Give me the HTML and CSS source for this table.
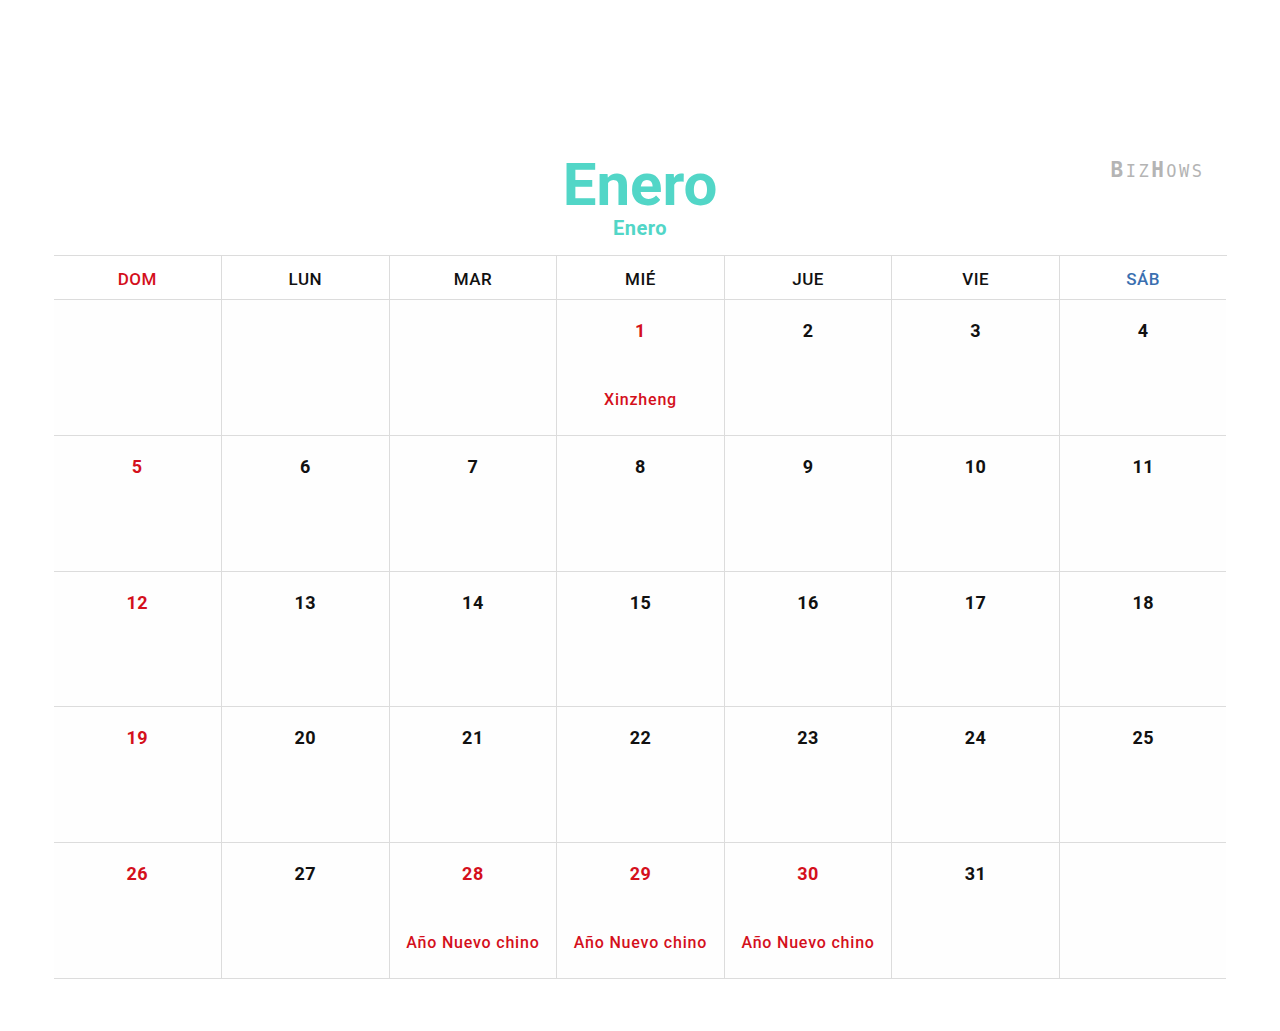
FILE: index.html
```html
<!DOCTYPE html>
<html lang="es">
<head>
<meta charset="utf-8">
<link rel="stylesheet" href="styles.css">
</head>
<body>
<div class="page">
  <header class="head">
    <div class="title">Enero</div>
    <div class="subtitle">Enero</div>
    <div class="logo">B<span class="sm">IZ</span>H<span class="sm">OWS</span></div>
  </header>
  <div class="cal">
    <div class="dow sun">DOM</div>
    <div class="dow">LUN</div>
    <div class="dow">MAR</div>
    <div class="dow">MIÉ</div>
    <div class="dow">JUE</div>
    <div class="dow">VIE</div>
    <div class="dow sat">SÁB</div>

    <div class="cell"></div>
    <div class="cell"></div>
    <div class="cell"></div>
    <div class="cell"><span class="num red">1</span><span class="hol">Xinzheng</span></div>
    <div class="cell"><span class="num">2</span></div>
    <div class="cell"><span class="num">3</span></div>
    <div class="cell"><span class="num">4</span></div>

    <div class="cell"><span class="num red">5</span></div>
    <div class="cell"><span class="num">6</span></div>
    <div class="cell"><span class="num">7</span></div>
    <div class="cell"><span class="num">8</span></div>
    <div class="cell"><span class="num">9</span></div>
    <div class="cell"><span class="num">10</span></div>
    <div class="cell"><span class="num">11</span></div>

    <div class="cell"><span class="num red">12</span></div>
    <div class="cell"><span class="num">13</span></div>
    <div class="cell"><span class="num">14</span></div>
    <div class="cell"><span class="num">15</span></div>
    <div class="cell"><span class="num">16</span></div>
    <div class="cell"><span class="num">17</span></div>
    <div class="cell"><span class="num">18</span></div>

    <div class="cell"><span class="num red">19</span></div>
    <div class="cell"><span class="num">20</span></div>
    <div class="cell"><span class="num">21</span></div>
    <div class="cell"><span class="num">22</span></div>
    <div class="cell"><span class="num">23</span></div>
    <div class="cell"><span class="num">24</span></div>
    <div class="cell"><span class="num">25</span></div>

    <div class="cell"><span class="num red">26</span></div>
    <div class="cell"><span class="num">27</span></div>
    <div class="cell"><span class="num red">28</span><span class="hol">Año Nuevo chino</span></div>
    <div class="cell"><span class="num red">29</span><span class="hol">Año Nuevo chino</span></div>
    <div class="cell"><span class="num red">30</span><span class="hol">Año Nuevo chino</span></div>
    <div class="cell"><span class="num">31</span></div>
    <div class="cell"></div>
  </div>
</div>
</body>
</html>
```
FILE: styles.css
```css
html, body {
  margin: 0;
  padding: 0;
  background: #fff;
}
body {
  font-family: Roboto, "Noto Sans", "Liberation Sans", sans-serif;
  color: #111;
}
.page {
  width: 1173px;
  margin: 0 auto;
  padding-top: 150px;
}
.head {
  position: relative;
  text-align: center;
  height: 106px;
  border-bottom: 1px solid #dcdcdc;
  box-sizing: border-box;
}
.title {
  font-size: 60px;
  font-weight: 700;
  color: #52d6c7;
  line-height: 69px;
}
.subtitle {
  font-size: 20px;
  font-weight: 700;
  color: #52d6c7;
  line-height: 18px;
  letter-spacing: 0.5px;
}
.logo {
  position: absolute;
  right: 22px;
  top: 8px;
  font-family: "DejaVu Sans Mono", "Liberation Mono", monospace;
  font-size: 21px;
  color: #b4b4b4;
  letter-spacing: 2.5px;
  font-weight: 700;
}
.logo .sm {
  font-size: 17px;
  font-weight: 400;
}
.cal {
  display: grid;
  grid-template-columns: repeat(7, 1fr);
  grid-template-rows: 44px repeat(5, 135.8px);
}
.dow {
  display: flex;
  align-items: center;
  justify-content: center;
  font-size: 17px;
  font-weight: 500;
  color: #111;
  border-bottom: 1px solid #dcdcdc;
  border-left: 1px solid #dcdcdc;
  padding-top: 3px;
  letter-spacing: 0.5px;
}
.dow:nth-child(7n+1) {
  border-left: none;
}
.dow.sun { color: #d4101c; }
.dow.sat { color: #3a6fb0; }
.cell {
  display: flex;
  flex-direction: column;
  align-items: center;
  border-bottom: 1px solid #dcdcdc;
  border-left: 1px solid #dcdcdc;
  background: #fefefe;
}
.cell:nth-child(7n+1) {
  border-left: none;
}
.num {
  font-size: 18px;
  font-weight: 700;
  margin-top: 19px;
  line-height: 24px;
  letter-spacing: 0.5px;
}
.red { color: #d4101c; }
.hol {
  color: #d4101c;
  font-size: 16px;
  font-weight: 500;
  margin-top: 46px;
  line-height: 22px;
  letter-spacing: 0.8px;
}
```
